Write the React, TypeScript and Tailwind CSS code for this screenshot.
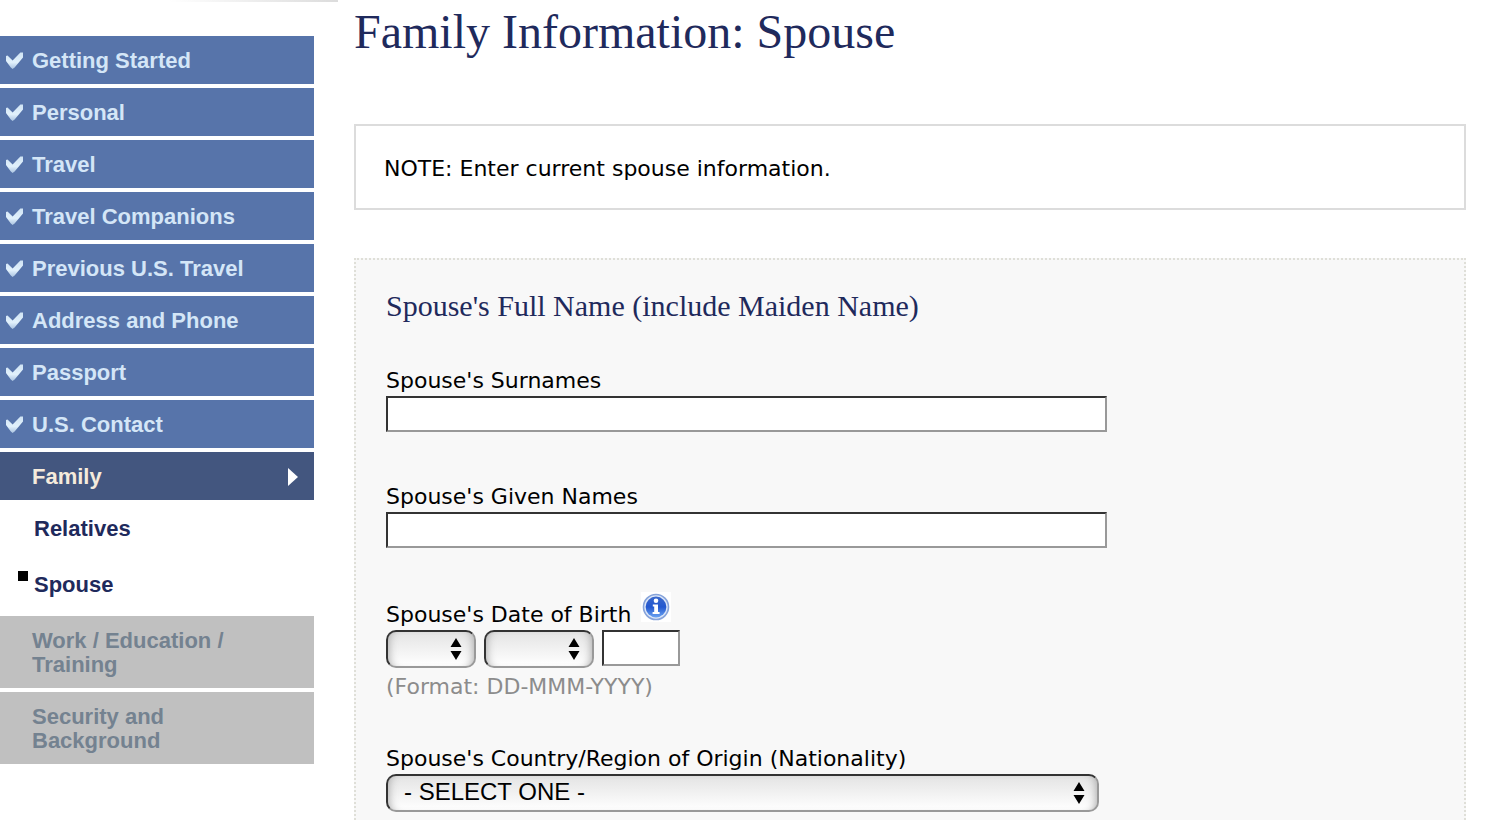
import { useId } from "react";
import type { ReactNode } from "react";

const completed = [
  "Getting Started",
  "Personal",
  "Travel",
  "Travel Companions",
  "Previous U.S. Travel",
  "Address and Phone",
  "Passport",
  "U.S. Contact",
];

const upcoming = ["Work / Education / Training", "Security and Background"];

function CheckIcon() {
  return (
    <svg width="18" height="18" viewBox="0 0 18 18" aria-hidden="true">
      <defs>
        <linearGradient id="check-fill" x1="0" y1="0" x2="0" y2="1">
          <stop offset="0" stopColor="#cfe3f4" />
          <stop offset="0.6" stopColor="#e2f1fc" />
          <stop offset="1" stopColor="#a9c2e0" />
        </linearGradient>
      </defs>
      <path
        d="M0 4 L1.5 3.6 L6.6 8.4 L14.4 0.6 L17 0.4 V5.6 L8.6 15.4 L6.6 17 L4.8 15.4 L0 9 Z"
        fill="url(#check-fill)"
      />
    </svg>
  );
}

function InfoIcon() {
  return (
    <svg width="30" height="30" viewBox="0 0 30 30" aria-hidden="true">
      <defs>
        <linearGradient id="info-fill" x1="0" y1="0" x2="0" y2="1">
          <stop offset="0" stopColor="#3a68cc" />
          <stop offset="0.5" stopColor="#2358cf" />
          <stop offset="1" stopColor="#6ba3f2" />
        </linearGradient>
      </defs>
      <rect width="30" height="30" fill="#fff" />
      <circle cx="15" cy="15" r="12.5" fill="#dde7f8" stroke="#86a3da" strokeWidth="1.6" />
      <circle cx="15" cy="15" r="10.4" fill="url(#info-fill)" />
      <circle cx="15" cy="8.8" r="2.3" fill="#fff" />
      <path d="M11.8 12.4 H17 V20 H18.6 V22 H11.6 V20 H13.2 V14.4 H11.8 Z" fill="#fff" />
    </svg>
  );
}

interface SelectProps {
  id?: string;
  label?: string;
  className: string;
  children: ReactNode;
}

function Select({ id, label, className, children }: SelectProps) {
  return (
    <div className={`relative ${className}`}>
      <select
        id={id}
        aria-label={label}
        className="block h-[38px] w-full appearance-none rounded-[10px] border-2 border-t-[#333] border-r-[#999] border-b-[#999] border-l-[#333] bg-linear-to-b from-[#e4e4e4] to-white px-4 pb-0.5 font-['Liberation_Sans',sans-serif] text-2xl leading-8 text-black shadow-[inset_8px_0_8px_-7px_#aaa,inset_-8px_0_8px_-7px_#aaa]"
      >
        {children}
      </select>
      <svg
        width="12"
        height="22"
        viewBox="0 0 12 22"
        aria-hidden="true"
        className="pointer-events-none absolute top-2 right-3.5"
      >
        <path d="M6 0 L11.5 9 H0.5 Z M6 22 L11.5 13 H0.5 Z" fill="#000" />
      </svg>
    </div>
  );
}

const inputClass =
  "block h-9 border-2 border-t-[#333] border-r-[#999] border-b-[#999] border-l-[#333] bg-white px-1";

function TextField({ label }: { label: string }) {
  const id = useId();
  return (
    <div>
      <label htmlFor={id} className="block pb-0.5">
        {label}
      </label>
      <input id={id} type="text" className={`${inputClass} w-full max-w-[721px]`} />
    </div>
  );
}

function Sidebar() {
  return (
    <aside className="w-[338px] shrink-0">
      <div className="h-0.5 bg-linear-to-r from-white from-50% to-[#dcdcdc]" />
      <nav className="mt-[34px] mr-6 font-['Liberation_Sans',sans-serif] leading-6 font-bold">
        <ul className="space-y-1">
          {completed.map((item) => (
            <li key={item}>
              <a
                href="#"
                className="flex items-center gap-2 bg-[#5774aa] pt-[13px] pb-[11px] pl-1.5 text-[#d4e6f7]"
              >
                <CheckIcon />
                {item}
              </a>
            </li>
          ))}
          <li>
            <a
              href="#"
              className="flex items-center justify-between bg-[#43567f] pt-[13px] pb-[11px] pr-4 pl-8 text-[#f5ebdc]"
            >
              Family
              <svg width="10" height="18" viewBox="0 0 10 18" aria-hidden="true">
                <path d="M0 0 L10 9 L0 18 Z" fill="#fff" />
              </svg>
            </a>
            <ul className="text-[#1f2a5c]">
              <li>
                <a href="#" className="block pt-[17px] pb-[15px] pl-[34px]">
                  Relatives
                </a>
              </li>
              <li className="flex items-start gap-1.5 pt-[17px] pb-[15px] pl-[18px]">
                <span className="-mt-0.5 size-2.5 bg-black" />
                <a href="#" aria-current="page">
                  Spouse
                </a>
              </li>
            </ul>
          </li>
          {upcoming.map((item) => (
            <li key={item} className="bg-[#c0c0c0] pt-[13px] pr-20 pb-[11px] pl-8 text-[#748290]">
              {item}
            </li>
          ))}
        </ul>
      </nav>
    </aside>
  );
}

export default function App() {
  return (
    <div className="flex h-screen overflow-hidden bg-white font-['DejaVu_Sans',sans-serif] text-[22px] leading-[26px] text-black">
      <Sidebar />
      <main className="flex min-w-0 flex-1 flex-col pr-7 pl-4">
        <h1 className="mt-1 font-['Liberation_Serif',serif] text-5xl leading-14 text-[#1f2a5c]">
          Family Information: Spouse
        </h1>

        <p className="mt-16 border-2 border-[#dcdcdc] px-7 pt-[30px] pb-[26px]">
          NOTE: Enter current spouse information.
        </p>

        <form className="mt-12 flex-1 border-2 border-b-0 border-dotted border-[#dfdfd8] bg-[#f8f8f8] px-[30px] pt-7">
          <h2 className="font-['Liberation_Serif',serif] text-3xl leading-9 text-[#1f2a5c]">
            Spouse's Full Name (include Maiden Name)
          </h2>

          <div className="mt-11 space-y-[52px]">
            <TextField label="Spouse's Surnames" />
            <TextField label="Spouse's Given Names" />
          </div>

          <div className="mt-11 flex items-end gap-2.5">
            <label htmlFor="birth-year" className="pb-0.5">
              Spouse's Date of Birth
            </label>
            <button type="button" aria-label="Help" className="mb-2">
              <InfoIcon />
            </button>
          </div>
          <div className="flex gap-2">
            <Select label="Day of birth" className="w-[90px]">
              <option></option>
            </Select>
            <Select label="Month of birth" className="w-[110px]">
              <option></option>
            </Select>
            <input id="birth-year" type="text" className={`${inputClass} w-[78px]`} />
          </div>
          <p className="mt-1.5 text-[#8c8c8c]">(Format: DD-MMM-YYYY)</p>

          <label htmlFor="nationality" className="mt-[46px] block pb-0.5">
            Spouse's Country/Region of Origin (Nationality)
          </label>
          <Select id="nationality" className="w-full max-w-[713px]">
            <option>- SELECT ONE -</option>
          </Select>
        </form>
      </main>
    </div>
  );
}
